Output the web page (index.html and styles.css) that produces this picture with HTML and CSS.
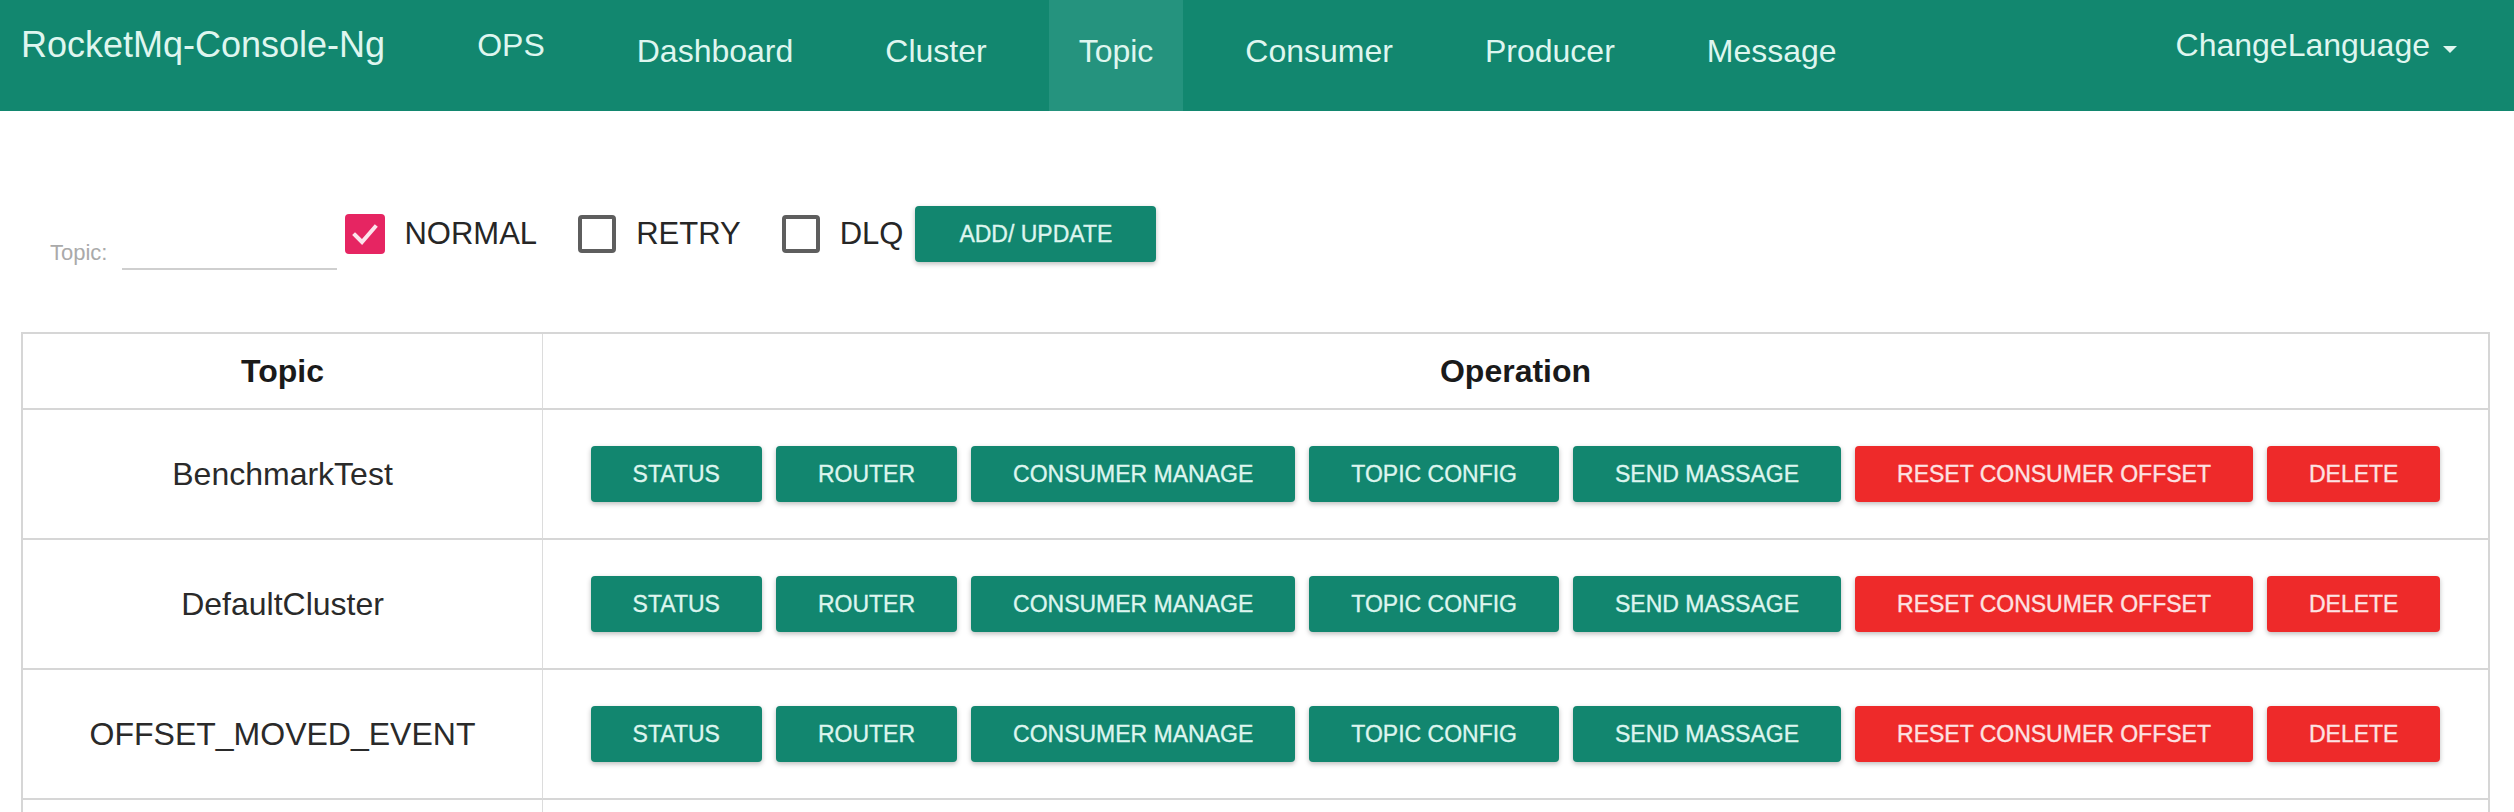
FILE: index.html
```html
<!DOCTYPE html>
<html lang="en">
<head>
<meta charset="utf-8">
<title>RocketMq-Console-Ng - Topic</title>
<link rel="stylesheet" href="styles.css">
</head>
<body>
<header class="navbar">
  <div class="brand">RocketMq-Console-Ng</div>
  <nav class="nav">
    <a class="nav-item raised">OPS</a>
    <a class="nav-item">Dashboard</a>
    <a class="nav-item">Cluster</a>
    <a class="nav-item active">Topic</a>
    <a class="nav-item">Consumer</a>
    <a class="nav-item">Producer</a>
    <a class="nav-item">Message</a>
  </nav>
  <div class="lang">ChangeLanguage<span class="caret"></span></div>
</header>

<main class="page">
  <div class="toolbar">
    <div class="field">
      <label class="field-label" for="topic">Topic:</label>
      <input class="field-input" id="topic" type="text">
    </div>
    <div class="check">
      <span class="box on"><svg viewBox="0 0 40 40" width="40" height="40"><polyline points="10,21 17,28 30,13" fill="none" stroke="#fce4ec" stroke-width="4" stroke-linecap="square"/></svg></span>
      <span class="check-text">NORMAL</span>
    </div>
    <div class="check">
      <span class="box off"></span>
      <span class="check-text">RETRY</span>
    </div>
    <div class="check last">
      <span class="box off"></span>
      <span class="check-text">DLQ</span>
    </div>
    <button class="btn teal wide">ADD/ UPDATE</button>
  </div>

  <table class="topics">
    <thead>
      <tr><th class="col-topic">Topic</th><th>Operation</th></tr>
    </thead>
    <tbody>
      <tr>
        <td class="col-topic">BenchmarkTest</td>
        <td><div class="ops">
          <button class="btn teal">STATUS</button><button class="btn teal">ROUTER</button><button class="btn teal">CONSUMER MANAGE</button><button class="btn teal">TOPIC CONFIG</button><button class="btn teal">SEND MASSAGE</button><button class="btn red">RESET CONSUMER OFFSET</button><button class="btn red">DELETE</button>
        </div></td>
      </tr>
      <tr>
        <td class="col-topic">DefaultCluster</td>
        <td><div class="ops">
          <button class="btn teal">STATUS</button><button class="btn teal">ROUTER</button><button class="btn teal">CONSUMER MANAGE</button><button class="btn teal">TOPIC CONFIG</button><button class="btn teal">SEND MASSAGE</button><button class="btn red">RESET CONSUMER OFFSET</button><button class="btn red">DELETE</button>
        </div></td>
      </tr>
      <tr>
        <td class="col-topic">OFFSET_MOVED_EVENT</td>
        <td><div class="ops">
          <button class="btn teal">STATUS</button><button class="btn teal">ROUTER</button><button class="btn teal">CONSUMER MANAGE</button><button class="btn teal">TOPIC CONFIG</button><button class="btn teal">SEND MASSAGE</button><button class="btn red">RESET CONSUMER OFFSET</button><button class="btn red">DELETE</button>
        </div></td>
      </tr>
      <tr>
        <td class="col-topic">SELF_TEST_TOPIC</td>
        <td><div class="ops">
          <button class="btn teal">STATUS</button><button class="btn teal">ROUTER</button><button class="btn teal">CONSUMER MANAGE</button><button class="btn teal">TOPIC CONFIG</button><button class="btn teal">SEND MASSAGE</button><button class="btn red">RESET CONSUMER OFFSET</button><button class="btn red">DELETE</button>
        </div></td>
      </tr>
    </tbody>
  </table>
</main>
</body>
</html>
```

FILE: styles.css
```css
* { box-sizing: border-box; }

html, body {
  margin: 0;
  padding: 0;
  background: #ffffff;
  font-family: "Liberation Sans", Arial, Helvetica, sans-serif;
  color: #222222;
}

.navbar {
  display: flex;
  height: 111px;
  background: #12876f;
  color: #dff6ef;
  padding: 0 57px 0 21px;
}

.brand {
  display: flex;
  align-items: center;
  font-size: 36px;
  padding-bottom: 21px;
  margin-right: 46px;
  white-space: nowrap;
}

.nav {
  display: flex;
  flex: 1;
}

.nav-item {
  display: flex;
  align-items: center;
  padding: 0 30px 9px;
  margin: 0 16px;
  font-size: 32px;
  white-space: nowrap;
  cursor: pointer;
}

.nav-item.raised { padding-bottom: 21px; }

.nav-item.active { background: #25937e; }

.lang {
  display: flex;
  align-items: center;
  font-size: 32px;
  padding-bottom: 21px;
  white-space: nowrap;
}

.caret {
  width: 0;
  height: 0;
  margin-left: 13px;
  margin-top: 8px;
  border-left: 7px solid transparent;
  border-right: 7px solid transparent;
  border-top: 7px solid #dff6ef;
}

.toolbar {
  display: flex;
  align-items: center;
  height: 56px;
  margin: 95px 0 0 50px;
}

.field {
  display: flex;
  align-items: flex-end;
  align-self: flex-end;
  margin-bottom: -8px;
  margin-right: 8px;
}

.field-label {
  font-size: 22px;
  line-height: 26px;
  color: #aaaaaa;
  margin: 0 15px 4px 0;
}

.field-input {
  width: 215px;
  height: 30px;
  padding: 0;
  border: none;
  border-bottom: 2px solid #cfcfcf;
  background: transparent;
  outline: none;
}

.check {
  display: flex;
  align-items: center;
  gap: 19px;
  margin-right: 40px;
  font-size: 31px;
  color: #262626;
}

.check.last { margin-right: 12px; }

.box {
  display: block;
  width: 40px;
  height: 40px;
  border-radius: 4px;
}

.box svg { display: block; }

.box.on { background: #e62562; }

.box.off {
  width: 38px;
  height: 38px;
  margin: 1px;
  border: 4px solid #5e5e5e;
  border-radius: 4px;
}

.btn {
  height: 56px;
  padding: 0 42px;
  border: none;
  border-radius: 4px;
  font-family: "Liberation Sans", Arial, Helvetica, sans-serif;
  font-size: 23px;
  -webkit-text-stroke: 0.35px currentColor;
  white-space: nowrap;
  box-shadow: 0 2px 5px 0 rgba(0, 0, 0, 0.26);
  cursor: pointer;
}

.btn.wide { padding: 0 44px; }

.btn.teal { background: #12866f; color: #ddf5ee; }
.btn.red { background: #ee2a2a; color: #fde2e2; }

.topics {
  width: calc(100% - 45px);
  margin: 70px 24px 0 21px;
  border-collapse: separate;
  border-spacing: 0;
  border: 2px solid #d6d6d6;
  table-layout: fixed;
}

.topics th,
.topics td {
  padding: 0;
  text-align: center;
  vertical-align: middle;
  border-bottom: 2px solid #d6d6d6;
  font-size: 32px;
}

.topics th {
  height: 76px;
  font-weight: bold;
  color: #1a1a1a;
}

.topics td {
  height: 130px;
  color: #2a2a2a;
}

.topics .col-topic {
  width: 520px;
  border-right: 1px solid #dcdcdc;
}

.ops {
  display: flex;
  justify-content: center;
  gap: 14px;
}
```
